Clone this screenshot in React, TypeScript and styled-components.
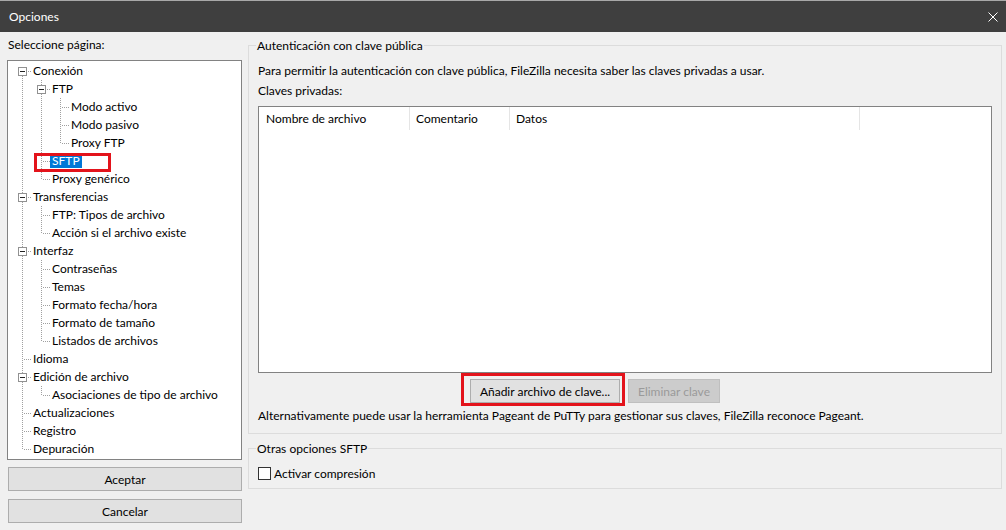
import styled, { createGlobalStyle } from "styled-components";

const GlobalStyle = createGlobalStyle`
  html, body {
    margin: 0;
    padding: 0;
  }
  body {
    font-family: Lato, "Liberation Sans", sans-serif;
    font-size: 12px;
    color: #000;
    background: #f0f0f0;
  }
`;

const vdots = "repeating-linear-gradient(to bottom, #a0a0a0 0 1px, transparent 1px 2px)";
const hdots = "repeating-linear-gradient(to right, #a0a0a0 0 1px, transparent 1px 2px)";

const Window = styled.div`
  width: 1006px;
  height: 530px;
  display: flex;
  flex-direction: column;
  overflow: hidden;
  background: #f0f0f0;
`;

const TitleBar = styled.header`
  height: 32px;
  flex: none;
  box-sizing: border-box;
  border-top: 1px solid #a8a8a8;
  background: #3f3f3f;
  color: #fff;
  display: flex;
  align-items: center;
  justify-content: space-between;
  padding: 0 8px 0 9px;
`;

const Body = styled.div`
  flex: 1;
  display: flex;
  gap: 6px;
  padding: 0 4px 0 7px;
`;

const LeftColumn = styled.div`
  width: 235px;
  flex: none;
  display: flex;
  flex-direction: column;
  padding-top: 6px;
`;

const PageLabel = styled.div`
  line-height: 14px;
  padding-left: 1px;
  margin-bottom: 8px;
`;

const TreeBox = styled.div`
  height: 400px;
  box-sizing: border-box;
  border: 1px solid #828282;
  background: #fff;
  padding: 1px 0 0 4px;
`;

const TreeRow = styled.div`
  display: flex;
  height: 18px;
`;

const Guide = styled.span<{ $line: boolean }>`
  width: 19px;
  flex: none;
  background: ${(p) => (p.$line ? `${vdots} 10px 0 / 1px 100% no-repeat` : "none")};
`;

const Connector = styled.span<{ $top: boolean; $bottom: boolean }>`
  width: 19px;
  flex: none;
  display: flex;
  align-items: flex-start;
  background: ${(p) =>
    [
      p.$top ? `${vdots} 10px 0 / 1px 10px no-repeat` : null,
      p.$bottom ? `${vdots} 10px 10px / 1px 8px no-repeat` : null,
      `${hdots} 12px 9px / 8px 1px no-repeat`,
    ]
      .filter(Boolean)
      .join(", ")};

  svg {
    margin: 5px 0 0 6px;
  }
`;

const NodeLabel = styled.span<{ $selected: boolean; $marked: boolean }>`
  align-self: center;
  margin-bottom: 2px;
  line-height: 15px;
  padding: 0 2px;
  white-space: nowrap;
  position: relative;
  background: ${(p) => (p.$selected ? "#0078d7" : "transparent")};
  color: ${(p) => (p.$selected ? "#fff" : "#000")};

  ${(p) =>
    p.$marked &&
    `
    &::after {
      content: "";
      position: absolute;
      left: -16px;
      top: 0;
      width: 77px;
      height: 19px;
      box-sizing: border-box;
      border: 3px solid #e3131b;
    }
  `}
`;

const DialogButton = styled.button`
  height: 24px;
  margin: 7px 0 0 1px;
  border: 1px solid #adadad;
  background: #e1e1e1;
  font: inherit;
  color: #000;
  padding: 0;

  & + & {
    margin-top: 8px;
  }
`;

const RightColumn = styled.div`
  flex: 1;
  display: flex;
  flex-direction: column;
  padding-top: 5px;
`;

const Group = styled.fieldset<{ $gap?: number }>`
  margin: ${(p) => p.$gap ?? 0}px 0 0 0;
  min-width: 0;
  border: 1px solid #dcdcdc;
  padding: 0 9px ${(p) => (p.$gap ? 8 : 10)}px;
  display: flex;
  flex-direction: column;
`;

const GroupTitle = styled.legend`
  line-height: 17px;
  padding: 0 1px;
  margin-left: -2px;
`;

const Text = styled.div<{ $top: number }>`
  line-height: 14px;
  margin-top: ${(p) => p.$top}px;
  white-space: nowrap;
`;

const KeyList = styled.div`
  margin-top: 8px;
  height: 267px;
  box-sizing: border-box;
  border: 1px solid #828282;
  background: #fff;
`;

const ListHeader = styled.div`
  display: flex;
  height: 23px;
`;

const HeaderCell = styled.div<{ $width: number; $pad: number }>`
  width: ${(p) => p.$width}px;
  flex: none;
  box-sizing: border-box;
  border-right: 1px solid #e5e5e5;
  padding-left: ${(p) => p.$pad}px;
  display: flex;
  align-items: center;
`;

const ButtonRow = styled.div`
  display: flex;
  gap: 8px;
  margin-top: 6px;
  padding-left: 212px;
`;

const Marked = styled.div`
  position: relative;
  display: flex;

  &::after {
    content: "";
    position: absolute;
    left: -9px;
    top: -6px;
    width: 164px;
    height: 33px;
    box-sizing: border-box;
    border: 3px solid #e3131b;
  }
`;

const PanelButton = styled.button<{ $width: number }>`
  width: ${(p) => p.$width}px;
  height: 24px;
  border: 1px solid ${(p) => (p.disabled ? "#bfbfbf" : "#adadad")};
  background: ${(p) => (p.disabled ? "#cccccc" : "#e1e1e1")};
  color: ${(p) => (p.disabled ? "#9a9a9a" : "#000")};
  font: inherit;
  padding: 0;
`;

const CheckRow = styled.label`
  display: flex;
  align-items: center;
  gap: 3px;
  height: 14px;
  margin-top: 9px;
`;

const CheckBox = styled.span`
  width: 13px;
  height: 13px;
  box-sizing: border-box;
  border: 1px solid #333;
  background: #fff;
`;

type TreeNode = { label: string; selected?: boolean; marked?: boolean; children?: TreeNode[] };

type Row = {
  label: string;
  guides: boolean[];
  first: boolean;
  last: boolean;
  expandable: boolean;
  selected: boolean;
  marked: boolean;
};

const pages: TreeNode[] = [
  {
    label: "Conexión",
    children: [
      { label: "FTP", children: [{ label: "Modo activo" }, { label: "Modo pasivo" }, { label: "Proxy FTP" }] },
      { label: "SFTP", selected: true, marked: true },
      { label: "Proxy genérico" },
    ],
  },
  { label: "Transferencias", children: [{ label: "FTP: Tipos de archivo" }, { label: "Acción si el archivo existe" }] },
  {
    label: "Interfaz",
    children: [
      { label: "Contraseñas" },
      { label: "Temas" },
      { label: "Formato fecha/hora" },
      { label: "Formato de tamaño" },
      { label: "Listados de archivos" },
    ],
  },
  { label: "Idioma" },
  { label: "Edición de archivo", children: [{ label: "Asociaciones de tipo de archivo" }] },
  { label: "Actualizaciones" },
  { label: "Registro" },
  { label: "Depuración" },
];

function flatten(nodes: TreeNode[], guides: boolean[], out: Row[]) {
  nodes.forEach((n, i) => {
    const last = i === nodes.length - 1;
    out.push({
      label: n.label,
      guides,
      first: guides.length === 0 && i === 0,
      last,
      expandable: !!n.children,
      selected: !!n.selected,
      marked: !!n.marked,
    });
    if (n.children) flatten(n.children, [...guides, !last], out);
  });
  return out;
}

const rows = flatten(pages, [], []);

function Expander() {
  return (
    <svg width="9" height="9" viewBox="0 0 9 9">
      <rect x="0.5" y="0.5" width="8" height="8" fill="#fff" stroke="#919191" />
      <path d="M2 4.5H7" stroke="#222" />
    </svg>
  );
}

export default function App() {
  return (
    <Window>
      <GlobalStyle />
      <TitleBar>
        <span>Opciones</span>
        <svg width="10" height="10" viewBox="0 0 10 10">
          <path d="M0.5 0.5L9.5 9.5M9.5 0.5L0.5 9.5" stroke="#fff" strokeWidth="1" />
        </svg>
      </TitleBar>
      <Body>
        <LeftColumn>
          <PageLabel>Seleccione página:</PageLabel>
          <TreeBox>
            {rows.map((r) => (
              <TreeRow key={r.label}>
                {r.guides.map((g, i) => (
                  <Guide key={i} $line={g} />
                ))}
                <Connector $top={!r.first} $bottom={!r.last}>
                  {r.expandable && <Expander />}
                </Connector>
                <NodeLabel $selected={r.selected} $marked={r.marked}>
                  {r.label}
                </NodeLabel>
              </TreeRow>
            ))}
          </TreeBox>
          <DialogButton>Aceptar</DialogButton>
          <DialogButton>Cancelar</DialogButton>
        </LeftColumn>
        <RightColumn>
          <Group>
            <GroupTitle>Autenticación con clave pública</GroupTitle>
            <Text $top={10}>
              Para permitir la autenticación con clave pública, FileZilla necesita saber las claves privadas a usar.
            </Text>
            <Text $top={6}>Claves privadas:</Text>
            <KeyList>
              <ListHeader>
                <HeaderCell $width={151} $pad={7}>Nombre de archivo</HeaderCell>
                <HeaderCell $width={100} $pad={6}>Comentario</HeaderCell>
                <HeaderCell $width={350} $pad={6}>Datos</HeaderCell>
              </ListHeader>
            </KeyList>
            <ButtonRow>
              <Marked>
                <PanelButton $width={150}>Añadir archivo de clave...</PanelButton>
              </Marked>
              <PanelButton $width={92} disabled>
                Eliminar clave
              </PanelButton>
            </ButtonRow>
            <Text $top={6}>
              Alternativamente puede usar la herramienta Pageant de PuTTy para gestionar sus claves, FileZilla reconoce Pageant.
            </Text>
          </Group>
          <Group $gap={6}>
            <GroupTitle>Otras opciones SFTP</GroupTitle>
            <CheckRow>
              <CheckBox />
              Activar compresión
            </CheckRow>
          </Group>
        </RightColumn>
      </Body>
    </Window>
  );
}
